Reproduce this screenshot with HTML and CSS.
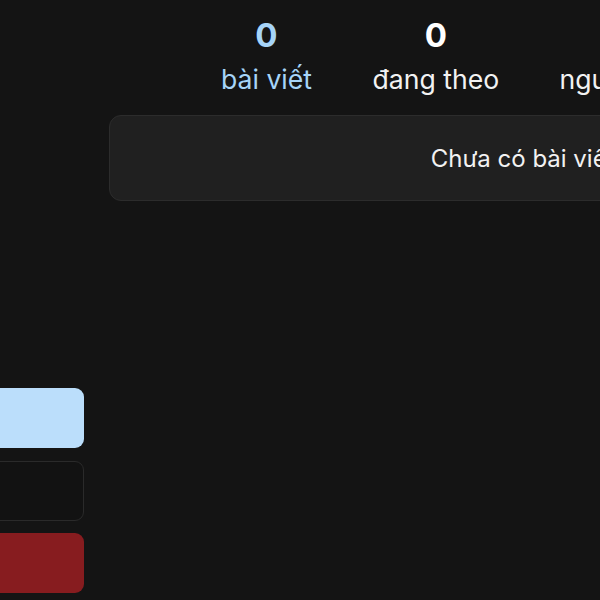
FILE: index.html
```html
<!DOCTYPE html>
<html lang="vi">
<head>
<meta charset="utf-8">
<link rel="stylesheet" href="styles.css">
</head>
<body>
<div class="layout">
  <aside class="sidebar">
    <div class="actions">
      <button class="btn btn-primary"></button>
      <button class="btn btn-outline"></button>
      <button class="btn btn-danger"></button>
    </div>
  </aside>
  <main class="main">
    <div class="stats">
      <div class="stat stat-active">
        <div class="stat-num">0</div>
        <div class="stat-label">bài viết</div>
      </div>
      <div class="stat">
        <div class="stat-num">0</div>
        <div class="stat-label">đang theo</div>
      </div>
      <div class="stat">
        <div class="stat-num">0</div>
        <div class="stat-label">người theo dõi</div>
      </div>
    </div>
    <div class="card">Chưa có bài viết nào</div>
  </main>
</div>
</body>
</html>
```

FILE: styles.css
```css
html, body {
  margin: 0;
  padding: 0;
  background: #141414;
  overflow: hidden;
  width: 600px;
  height: 600px;
}
body {
  font-family: Inter, "Noto Sans", sans-serif;
  color: #f2f2f2;
}
.layout {
  display: flex;
  gap: 25px;
  width: 1200px;
  margin-left: -116px;
}
.sidebar {
  width: 200px;
  flex: none;
}
.actions {
  display: flex;
  flex-direction: column;
  gap: 12.5px;
  padding-top: 388px;
}
.btn {
  display: block;
  height: 60px;
  border-radius: 9px;
  border: 1px solid transparent;
  padding: 0;
}
.btn-primary {
  background: #bbdefb;
}
.btn-outline {
  background: #121212;
  border-color: #2a2a2a;
}
.btn-danger {
  background: #871c1f;
}
.main {
  width: 900px;
  flex: none;
}
.stats {
  display: flex;
  gap: 60.5px;
  padding-left: 112px;
  padding-top: 14px;
}
.stat {
  display: flex;
  flex-direction: column;
  align-items: center;
}
.stat-num {
  font-size: 33px;
  font-weight: 700;
  line-height: 42px;
  color: #ffffff;
}
.stat-label {
  margin-top: 6px;
  font-size: 26.6px;
  line-height: 34px;
  color: #f2f2f2;
}
.stat-active .stat-num,
.stat-active .stat-label {
  color: #a6d4f8;
}
.card {
  box-sizing: border-box;
  margin-top: 19px;
  width: 876px;
  height: 86px;
  background: #202020;
  border: 1px solid #2c2c2c;
  border-radius: 12px;
  display: flex;
  align-items: center;
  justify-content: center;
  font-size: 24px;
  color: #f2f2f2;
}
```
